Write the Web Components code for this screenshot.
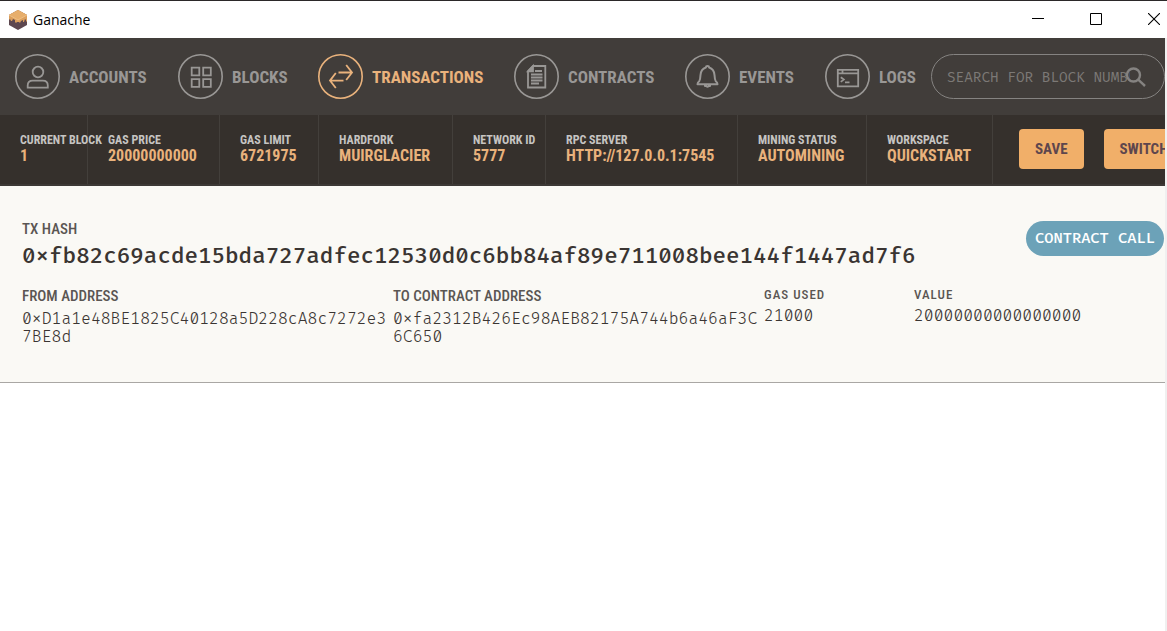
<!DOCTYPE html>
<html lang="en">
<head>
<meta charset="utf-8">
<title>Ganache</title>
<style>
  html, body { margin: 0; height: 100%; }
  body {
    --cond: "Roboto Condensed", Roboto, "Liberation Sans", sans-serif;
    --mono: "Fira Code", "Fira Mono", "DejaVu Sans Mono", monospace;
    --nav-bg: #413d3a;
    --bar-bg: #35302c;
    --orange: #e9b27c;
    --button: #f1af69;
    --muted: #999795;
    --paper: #faf9f5;
    background: #fff;
    overflow: hidden;
    font-family: var(--cond);
  }
</style>
</head>
<body>
<ganache-app></ganache-app>

<script>
function define(name, html, setup) {
  const template = document.createElement('template');
  template.innerHTML = html;
  customElements.define(name, class extends HTMLElement {
    constructor() {
      super();
      this.attachShadow({ mode: 'open' }).append(template.content.cloneNode(true));
    }
    connectedCallback() { if (setup) setup(this, this.shadowRoot); }
  });
}

define('title-bar', `
  <style>
    :host { display: flex; align-items: center; height: 38px; box-sizing: border-box; border-top: 1px solid #2b2829; padding-left: 8px; background: #fff; }
    .name { flex: 1; margin-left: 5px; font: 14px/20px "Open Sans", "Noto Sans", sans-serif; color: #000; }
    .controls { display: flex; gap: 46px; padding: 0 7px 2px 0; }
    button { display: block; width: 12px; height: 12px; padding: 0; border: 0; background: none; }
    svg { display: block; }
  </style>
  <svg width="20" height="20" viewBox="0 0 20 20" aria-hidden="true">
    <path d="M10 0 19 5v10l-9 5-9-5V5z" fill="#5d474f"/>
    <path d="M10 0 19 5v6l-1 1v-2l-1-1-1 3-1 0v-2l-2 1-1 2-1-1-2 0-1 1-1-1v-2l-2-1-1 2-1 0-1-2-1 1V5z" fill="#dc9f5c"/>
    <path d="M10 0 19 5l-9 5-9-5z" fill="#e7ae6b"/>
    <path d="M1 5l9 5 9-5" fill="none" stroke="#f1c48c" stroke-width=".8"/>
  </svg>
  <span class="name">Ganache</span>
  <div class="controls">
    <button aria-label="Minimize"><svg width="12" height="12"><path d="M0 5.500h12" stroke="#000"/></svg></button>
    <button aria-label="Maximize"><svg width="12" height="12"><path d="M.5.5h11v11H.5z" fill="none" stroke="#000"/></svg></button>
    <button aria-label="Close"><svg width="12" height="12"><path d="M0 0l12 12M12 0 0 12" stroke="#000" stroke-width="1.100"/></svg></button>
  </div>
`);

const icons = {
  accounts: '<circle cx="23" cy="18" r="5.300"/><path d="M12.700 33.700v-2.200q0-4.800 5-4.800h10.100q5 0 5 4.800v2.200z"/>',
  blocks: '<path d="M13.700 13.700h7.600v7.600h-7.600zM25.200 13.700h7.600v7.600h-7.600zM13.700 25.200h7.600v7.600h-7.600zM25.200 25.200h7.600v7.600h-7.600z"/>',
  transactions: '<path d="M20.500 18.500h13.500M28.200 11 34 18.500 28.200 26M25.500 26.600H12M17.800 19 12 26.600l5.800 7.400"/>',
  contracts: '<path d="M19 12h12.300v21.500H14V17z"/><path d="M14 17.300h5V12z" fill="currentColor"/><path d="M21 17h7M17 20.500h11.500M17 23.500h11.500M17 26.500h11.500M17 29.500h8"/>',
  events: '<g stroke-width="2" stroke-linejoin="round"><path d="M20.800 13.500q.2-1.500 1.700-1.500t1.700 1.500q4.800 1.500 5.300 7.500.2 4.500 1.300 6.200 1.700 1.200 1.700 3H12.500q0-1.800 1.700-3 1.100-1.700 1.300-6.200.5-6 5.300-7.500zM20 30.700v1.300h1.400q1.100 1.600 2.200 0H25v-1.300"/></g>',
  logs: '<path d="M12.800 15.800h20.400v16.500H12.800zM13 19.300h20M17.500 16v3M15.800 23.300l3 2.300-3 2.300M20 28.300h4.500"/>'
};

define('nav-item', `
  <style>
    :host { display: block; min-width: 0; }
    a { display: flex; align-items: center; gap: 9px; text-decoration: none; color: var(--muted); font: 700 17px/20px var(--cond); white-space: nowrap; text-transform: uppercase; }
    :host([active]) a { color: var(--orange); }
    svg { flex: none; display: block; fill: none; stroke: currentColor; stroke-width: 1.800; }
  </style>
  <a href="#"><svg width="45" height="45" viewBox="0 0 45 45" aria-hidden="true"></svg><span><slot></slot></span></a>
`, (host, root) => {
  root.querySelector('svg').innerHTML = '<circle cx="22.500" cy="22.500" r="21.700" stroke-width="1.600"/>' + icons[host.getAttribute('icon')];
  if (host.hasAttribute('active')) root.querySelector('a').setAttribute('aria-current', 'page');
});

define('block-search', `
  <style>
    :host { display: flex; align-items: center; height: 45px; box-sizing: border-box; border: 1px solid #858381; border-radius: 23px; padding: 0 18px 0 15px; }
    input { flex: 1; min-width: 0; height: 26px; margin-right: -5px; padding: 2px 0 0; box-sizing: border-box; border: 0; outline: 0; background: none; color: var(--muted); font: 14px/24px var(--mono); }
    input::placeholder { color: #7c7976; opacity: 1; }
    svg { flex: none; display: block; }
  </style>
  <input type="text" aria-label="Search" placeholder="SEARCH FOR BLOCK NUMBERS OR TX HASHES">
  <svg width="21" height="20" fill="none" stroke="#858381" stroke-width="2.400" aria-hidden="true"><circle cx="8.500" cy="8" r="6.500"/><path d="M13.200 12.700 20 19"/></svg>
`);

define('main-nav', `
  <style>
    :host { display: grid; grid-template-columns: 916fr 234fr; align-items: center; height: 77px; padding-left: 15px; background: var(--nav-bg); }
    nav { min-width: 0; display: grid; grid-template-columns: 163fr 140fr 196fr 171fr 140fr 106fr; }
    block-search { min-width: 0; }
  </style>
  <nav>
    <nav-item icon="accounts">Accounts</nav-item>
    <nav-item icon="blocks">Blocks</nav-item>
    <nav-item icon="transactions" active>Transactions</nav-item>
    <nav-item icon="contracts">Contracts</nav-item>
    <nav-item icon="events">Events</nav-item>
    <nav-item icon="logs">Logs</nav-item>
  </nav>
  <block-search></block-search>
`);

define('status-item', `
  <style>
    :host { display: block; min-width: 0; box-sizing: border-box; padding: 17px 0 0 20px; border-right: 1px solid #433f3b; white-space: nowrap; text-transform: uppercase; }
    .label { font: 700 12px/16px var(--cond); color: #c6c4c2; }
    .value { font: 700 16px/16px var(--cond); color: var(--orange); }
  </style>
  <div class="label"></div>
  <div class="value"><slot></slot></div>
`, (host, root) => { root.querySelector('.label').textContent = host.getAttribute('label'); });

define('action-button', `
  <style>
    :host { display: block; flex: none; }
    button { display: block; height: 40px; padding: 0 16px; border: 0; border-radius: 4px; background: var(--button); color: #5e464d; font: 700 15px/40px var(--cond); text-transform: uppercase; }
  </style>
  <button type="button"><slot></slot></button>
`);

define('status-bar', `
  <style>
    :host { display: grid; grid-template-columns: 993fr 172fr; height: 71px; box-sizing: border-box; background: var(--bar-bg); border-bottom: 2px solid #3d3936; }
    .items { min-width: 0; display: grid; grid-template-columns: 88fr 132fr 99fr 134fr 93fr 192fr 129fr 126fr; }
    .actions { min-width: 0; display: flex; align-items: flex-start; gap: 20px; padding: 14px 0 0 26px; box-sizing: border-box; overflow: hidden; white-space: nowrap; }
  </style>
  <div class="items">
    <status-item label="Current Block">1</status-item>
    <status-item label="Gas Price">20000000000</status-item>
    <status-item label="Gas Limit">6721975</status-item>
    <status-item label="Hardfork">Muirglacier</status-item>
    <status-item label="Network ID">5777</status-item>
    <status-item label="RPC Server">http://127.0.0.1:7545</status-item>
    <status-item label="Mining Status">Automining</status-item>
    <status-item label="Workspace">Quickstart</status-item>
  </div>
  <div class="actions">
    <action-button>Save</action-button>
    <action-button>Switch</action-button>
  </div>
`);

define('tx-field', `
  <style>
    :host { display: block; min-width: 0; box-sizing: border-box; padding-right: 6px; color: #5a5653; }
    .label { font: 500 15px/20px var(--cond); text-transform: uppercase; }
    .value { margin-top: 4px; font: 300 16px/18px var(--mono); color: #3a3532; overflow-wrap: anywhere; }
    :host([compact]) .label { font-size: 13px; line-height: 18px; letter-spacing: 1px; }
    :host([compact]) .value { margin-top: 3px; }
  </style>
  <div class="label"></div>
  <div class="value"><slot></slot></div>
`, (host, root) => { root.querySelector('.label').textContent = host.getAttribute('label'); });

define('tx-card', `
  <style>
    :host { display: block; background: var(--paper); border-bottom: 1px solid #a9a7a4; padding: 33px 1px 36px 22px; }
    .head { display: flex; justify-content: space-between; align-items: flex-start; }
    .label { font: 500 15px/20px var(--cond); color: #5a5653; }
    .hash { margin-top: 4px; font: 500 22px/28px var(--mono); color: #3a3532; white-space: nowrap; }
    .badge { margin-top: 2px; padding: 1px 9px 0; border-radius: 18px; background: #6ca2b8; color: #fff; font: 500 15px/34px var(--mono); white-space: nowrap; }
    .fields { display: grid; grid-template-columns: 371fr 371fr 150fr 250fr; margin-top: 15px; }
  </style>
  <div class="head">
    <div>
      <div class="label">TX HASH</div>
      <div class="hash"><slot></slot></div>
    </div>
    <div class="badge">CONTRACT CALL</div>
  </div>
  <div class="fields">
    <tx-field label="From Address">0xD1a1e48BE1825C40128a5D228cA8c7272e37BE8d</tx-field>
    <tx-field label="To Contract Address">0xfa2312B426Ec98AEB82175A744b6a46aF3C6C650</tx-field>
    <tx-field label="Gas Used" compact>21000</tx-field>
    <tx-field label="Value" compact>20000000000000000</tx-field>
  </div>
`);

define('ganache-app', `
  <style>
    :host { display: flex; flex-direction: column; height: 100%; }
    main { flex: 1; border-right: 2px solid #f0f0f0; overflow: hidden; }
  </style>
  <title-bar></title-bar>
  <main>
    <main-nav></main-nav>
    <status-bar></status-bar>
    <tx-card>0xfb82c69acde15bda727adfec12530d0c6bb84af89e711008bee144f1447ad7f6</tx-card>
  </main>
`);
</script>
</body>
</html>
